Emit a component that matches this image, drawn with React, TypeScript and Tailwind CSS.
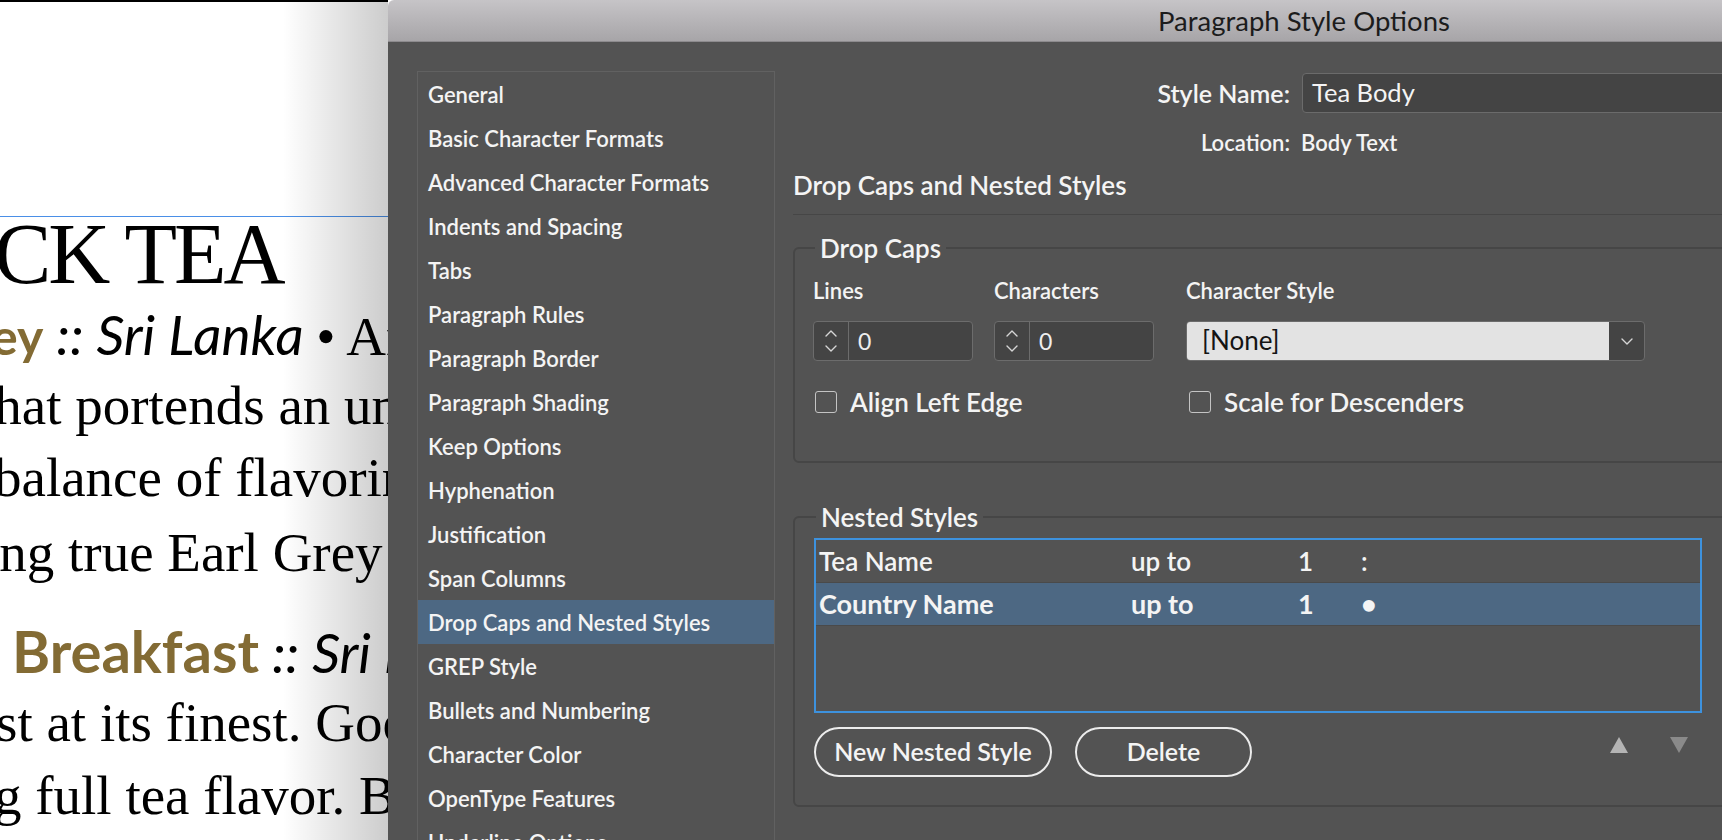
import React from "react";

const items = [
  "General",
  "Basic Character Formats",
  "Advanced Character Formats",
  "Indents and Spacing",
  "Tabs",
  "Paragraph Rules",
  "Paragraph Border",
  "Paragraph Shading",
  "Keep Options",
  "Hyphenation",
  "Justification",
  "Span Columns",
  "Drop Caps and Nested Styles",
  "GREP Style",
  "Bullets and Numbering",
  "Character Color",
  "OpenType Features",
  "Underline Options",
  "Strikethrough Options",
];

function Chevron({ dir }: { dir: "up" | "down" }) {
  return (
    <svg width="12" height="7" viewBox="0 0 12 7" fill="none">
      <path
        d={dir === "up" ? "M1 6L6 1L11 6" : "M1 1L6 6L11 1"}
        stroke="#d6d6d6"
        strokeWidth="1.4"
        strokeLinecap="round"
        strokeLinejoin="round"
      />
    </svg>
  );
}

function Spinner() {
  return (
    <div className="w-[160px] h-[40px] rounded-[4px] border-[1.5px] border-[#6c6c6c] bg-[#444444] flex">
      <div className="w-[35px] border-r border-[#6c6c6c] flex flex-col items-center justify-center gap-[8px]">
        <Chevron dir="up" />
        <Chevron dir="down" />
      </div>
      <div className="pl-[9px] flex items-center text-[23px] font-normal text-[#eeeeee]">0</div>
    </div>
  );
}

function Checkbox({ label }: { label: string }) {
  return (
    <div className="flex items-center h-[24px] ml-[2px]">
      <div className="w-[22px] h-[22px] rounded-[3px] border-[1.5px] border-[#c4c4c4]" />
      <span className="ml-[13px] text-[26px] leading-[24px] text-[#f4f4f4] whitespace-nowrap">{label}</span>
    </div>
  );
}

function Doc() {
  const serif = "font-['Liberation_Serif',serif] text-[55px] leading-[72px] whitespace-nowrap text-black";
  return (
    <div className="relative w-[388px] h-[840px] shrink-0 overflow-hidden bg-white">
      <div className="h-[2px] bg-black" />
      <div className="h-[214px]" />
      <div className="h-px bg-[#4a8fe7]" />
      <div className="mt-[7px] h-[74px] font-['Liberation_Serif',serif] text-[86px] leading-[60px] tracking-[-3px] whitespace-nowrap text-black ml-[-6px]">
        CK TEA
      </div>
      <div className="h-[72px] ml-[-9px] font-['Lato',sans-serif] text-[50px] leading-[72px] whitespace-nowrap text-black">
        <span className="font-bold text-[#836b34]">ey</span>
        <span className="italic text-[55px]"> :: Sri Lanka </span>
        <span className="font-['Liberation_Serif',serif] text-[55px]">• An aroma</span>
      </div>
      <div className={`h-[72px] ml-[-21px] ${serif}`}>that portends an unusual</div>
      <div className={`h-[75px] ml-[-6px] ${serif}`}>balance of flavoring</div>
      <div className={`h-[98px] ml-[-16px] ${serif}`}>ing true Earl Grey</div>
      <div className="h-[72px] ml-[12px] font-['Lato',sans-serif] text-[52px] leading-[72px] whitespace-nowrap text-black">
        <span className="font-bold text-[58px] text-[#836b34]">Breakfast</span>
        <span className="italic text-[55px]"> :: Sri Lanka</span>
      </div>
      <div className={`h-[73px] ml-[-4px] ${serif}`}>st at its finest. Good</div>
      <div className={`ml-[-6px] ${serif}`}>g full tea flavor. Bold</div>
      <div className="absolute inset-y-0 right-0 w-[105px] bg-linear-to-r from-transparent to-black/20 pointer-events-none" />
    </div>
  );
}

function Dialog() {
  return (
    <div className="flex-1 min-w-0 h-[840px] flex flex-col overflow-hidden font-['Lato',sans-serif] font-semibold">
      <div className="h-[42px] shrink-0 rounded-tl-[6px] bg-linear-to-b from-[#c6c4c7] to-[#a7a5a8] border-b border-[#8d8b8e] flex items-center pl-[770px]">
        <span className="text-[27.5px] font-normal text-[#1c1c1c] whitespace-nowrap">Paragraph Style Options</span>
      </div>
      <div className="flex-1 bg-[#535353] flex overflow-hidden">
        <div className="ml-[29px] mt-[29px] w-[358px] h-[900px] shrink-0 border border-[#616161]">
          {items.map((it) => (
            <div
              key={it}
              className={`h-[44px] flex items-center pl-[10px] text-[22px] text-[#f4f4f4] whitespace-nowrap ${
                it === "Drop Caps and Nested Styles" ? "bg-[#4d6883]" : ""
              }`}
            >
              {it}
            </div>
          ))}
        </div>
        <div className="ml-[18px] w-[1100px] shrink-0 flex flex-col text-[#f4f4f4]">
          <div className="mt-[31px] h-[40px] flex">
            <div className="w-[497px] shrink-0 text-right text-[25px] leading-[40px]">Style Name:</div>
            <div className="ml-[12px] w-[600px] h-[40px] rounded-[4px] border-[1.5px] border-[#6b6b6b] bg-[#444444] pl-[9px] text-[25.5px] font-normal leading-[37px]">
              Tea Body
            </div>
          </div>
          <div className="mt-[18px] h-[24px] flex text-[22px] leading-[24px]">
            <div className="w-[497px] shrink-0 text-right">Location:</div>
            <div className="ml-[11px]">Body Text</div>
          </div>
          <div className="mt-[15px] h-[30px] text-[26px] leading-[30px] whitespace-nowrap">Drop Caps and Nested Styles</div>
          <div className="mt-[14px] h-px w-[1000px] bg-[#464646]" />

          <fieldset className="mt-[19px] w-[1000px] border-2 border-[#464646] rounded-[6px] pl-[18px] pt-[17px] pb-[47px]">
            <legend className="ml-[2px] px-[5px] text-[26px] leading-[28px]">Drop Caps</legend>
            <div className="flex h-[24px] text-[22px] leading-[24px]">
              <div className="w-[181px]">Lines</div>
              <div className="w-[192px]">Characters</div>
              <div>Character Style</div>
            </div>
            <div className="mt-[18px] flex h-[40px]">
              <div className="w-[181px]">
                <Spinner />
              </div>
              <div className="w-[192px]">
                <Spinner />
              </div>
              <div className="w-[459px] h-[40px] rounded-[4px] border-[1.5px] border-[#6c6c6c] bg-[#444444] flex overflow-hidden">
                <div className="flex-1 bg-[#e3e3e3] pl-[15px] text-[26px] font-normal leading-[37px] text-[#141414]">[None]</div>
                <div className="w-[35px] flex items-center justify-center">
                  <Chevron dir="down" />
                </div>
              </div>
            </div>
            <div className="mt-[29px] flex h-[24px]">
              <div className="w-[373px]">
                <Checkbox label="Align Left Edge" />
              </div>
              <div className="ml-[1px]">
                <Checkbox label="Scale for Descenders" />
              </div>
            </div>
          </fieldset>

          <fieldset className="mt-[40px] w-[1000px] border-2 border-[#464646] rounded-[6px] pl-[19px] pt-[7px] pb-[28px]">
            <legend className="ml-[2px] px-[5px] text-[26px] leading-[28px]">Nested Styles</legend>
            <div className="w-[888px] h-[175px] border-2 border-[#3d92de]">
              <div className="h-[43px] flex items-center pl-[3px] text-[26px] border-b border-[#4a4a4a]">
                <div className="w-[312px]">Tea Name</div>
                <div className="w-[167px]">up to</div>
                <div className="w-[63px]">1</div>
                <div>:</div>
              </div>
              <div className="h-[43px] flex items-center pl-[3px] text-[27px] font-bold bg-[#4d6883] border-b border-[#4a4a4a]">
                <div className="w-[312px]">Country Name</div>
                <div className="w-[167px]">up to</div>
                <div className="w-[63px]">1</div>
                <div>•</div>
              </div>
            </div>
            <div className="mt-[14px] w-[888px] flex">
              <div className="w-[238px] h-[50px] rounded-full border-2 border-[#ececec] flex items-center justify-center text-[25px]">
                New Nested Style
              </div>
              <div className="ml-[23px] w-[177px] h-[50px] rounded-full border-2 border-[#ececec] flex items-center justify-center text-[25px]">
                Delete
              </div>
              <div className="ml-auto mr-[14px] mt-[10px] flex gap-[42px] self-start">
                <svg width="18" height="16" viewBox="0 0 18 16">
                  <path d="M9 0L18 16H0Z" fill="#b4b4b4" />
                </svg>
                <svg width="18" height="16" viewBox="0 0 18 16">
                  <path d="M0 0H18L9 16Z" fill="#8a8a8a" />
                </svg>
              </div>
            </div>
          </fieldset>
        </div>
      </div>
    </div>
  );
}

export default function App() {
  return (
    <div className="w-[1722px] h-[840px] overflow-hidden flex bg-white">
      <Doc />
      <Dialog />
    </div>
  );
}
